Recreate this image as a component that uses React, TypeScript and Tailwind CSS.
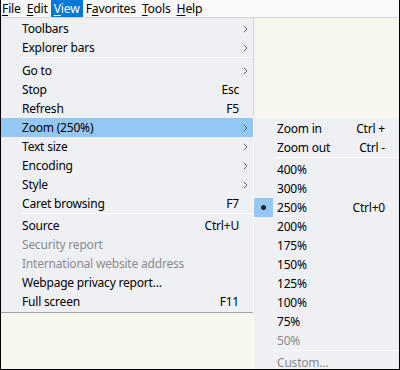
import React from "react";

type Item =
  | { sep: true }
  | { label: string; shortcut?: string; sub?: boolean; disabled?: boolean; active?: boolean };

const mainItems: Item[] = [
  { label: "Toolbars", sub: true },
  { label: "Explorer bars", sub: true },
  { sep: true },
  { label: "Go to", sub: true },
  { label: "Stop", shortcut: "Esc" },
  { label: "Refresh", shortcut: "F5" },
  { label: "Zoom (250%)", sub: true, active: true },
  { label: "Text size", sub: true },
  { label: "Encoding", sub: true },
  { label: "Style", sub: true },
  { label: "Caret browsing", shortcut: "F7" },
  { sep: true },
  { label: "Source", shortcut: "Ctrl+U" },
  { label: "Security report", disabled: true },
  { label: "International website address", disabled: true },
  { label: "Webpage privacy report..." },
  { label: "Full screen", shortcut: "F11" },
];

const zoomItems: (Item & { checked?: boolean })[] = [
  { label: "Zoom in", shortcut: "Ctrl +" },
  { label: "Zoom out", shortcut: "Ctrl -" },
  { sep: true },
  { label: "400%" },
  { label: "300%" },
  { label: "250%", shortcut: "Ctrl+0", checked: true },
  { label: "200%" },
  { label: "175%" },
  { label: "150%" },
  { label: "125%" },
  { label: "100%" },
  { label: "75%" },
  { label: "50%", disabled: true },
  { sep: true },
  { label: "Custom...", disabled: true },
];

function Chevron() {
  return (
    <svg width="5" height="8" viewBox="0 0 5 8" className="block">
      <path d="M0.8 0.8 L4 4 L0.8 7.2" fill="none" stroke="#555" strokeWidth="0.9" />
    </svg>
  );
}

function MenuBarItem({ first, rest, active }: { first: string; rest: string; active?: boolean }) {
  return (
    <div className={`h-[17px] px-[3px] leading-[17px] ${active ? "bg-[#0078d7] text-white" : "text-black"}`}>
      <span className="underline underline-offset-[2px] decoration-1">{first}</span>
      {rest}
    </div>
  );
}

export default function App() {
  return (
    <div
      className="relative w-[400px] h-[370px] overflow-hidden bg-[#f7f6ef] border-x border-b border-black text-[12px] tracking-[-0.2px]"
      style={{ fontFamily: '"Noto Sans", "Open Sans", sans-serif' }}
    >
      {/* Menu bar */}
      <div className="flex h-[18px] bg-[#f9f9f9] border-b border-[#d6d6d6]">
        <div className="flex -ml-[2px] text-[12.2px]">
          <MenuBarItem first="F" rest="ile" />
          <MenuBarItem first="E" rest="dit" />
          <MenuBarItem first="V" rest="iew" active />
          <div className="h-[17px] px-[3px] leading-[17px]">
            F<span className="underline underline-offset-[2px] decoration-1">a</span>vorites
          </div>
          <MenuBarItem first="T" rest="ools" />
          <MenuBarItem first="H" rest="elp" />
        </div>
      </div>

      {/* View menu */}
      <div className="absolute left-0 top-[18px] w-[253px] h-[295px] bg-[#eff0f4] border-r border-[#d4d5da] border-b border-b-[#a3a3a3] pt-[1px]">
        {mainItems.map((it, i) =>
          "sep" in it ? (
            <div key={i} className={`${i === 2 ? "h-[4px]" : "h-[3px]"} pl-[21px]`}>
              <div className="h-px bg-[#fbfbfc]" />
            </div>
          ) : (
            <div
              key={i}
              className={`flex items-center h-[19px] pl-[21px] ${it.active ? "bg-[#93c7f4]" : ""} ${
                it.disabled ? "text-[#8b8b8e]" : "text-black"
              }`}
            >
              <span className="flex-1 whitespace-nowrap">{it.label}</span>
              {it.shortcut && <span>{it.shortcut}</span>}
              <span className="w-[14px] flex justify-end pr-[5px]">{it.sub && <Chevron />}</span>
            </div>
          )
        )}
      </div>

      {/* Zoom submenu */}
      <div className="absolute left-[252px] top-[117px] right-0 bottom-0 bg-[#eff0f4] border-l border-t border-[#fafafb] pt-[1px]">
        {zoomItems.map((it, i) =>
          "sep" in it ? (
            <div key={i} className="h-[3px] pl-[20px]">
              <div className="h-px bg-[#fbfbfc]" />
            </div>
          ) : (
            <div key={i} className={`flex items-center h-[19px] ${it.disabled ? "text-[#8b8b8e]" : "text-black"}`}>
              <span className={`w-[19px] h-[19px] flex items-center justify-center ${it.checked ? "bg-[#93c7f4]" : ""}`}>
                {it.checked && <span className="w-[5px] h-[5px] rounded-full bg-[#222]" />}
              </span>
              <span className="flex-1 pl-[4px] whitespace-nowrap">{it.label}</span>
              {it.shortcut && <span className="pr-[14px]">{it.shortcut}</span>}
            </div>
          )
        )}
      </div>
    </div>
  );
}
